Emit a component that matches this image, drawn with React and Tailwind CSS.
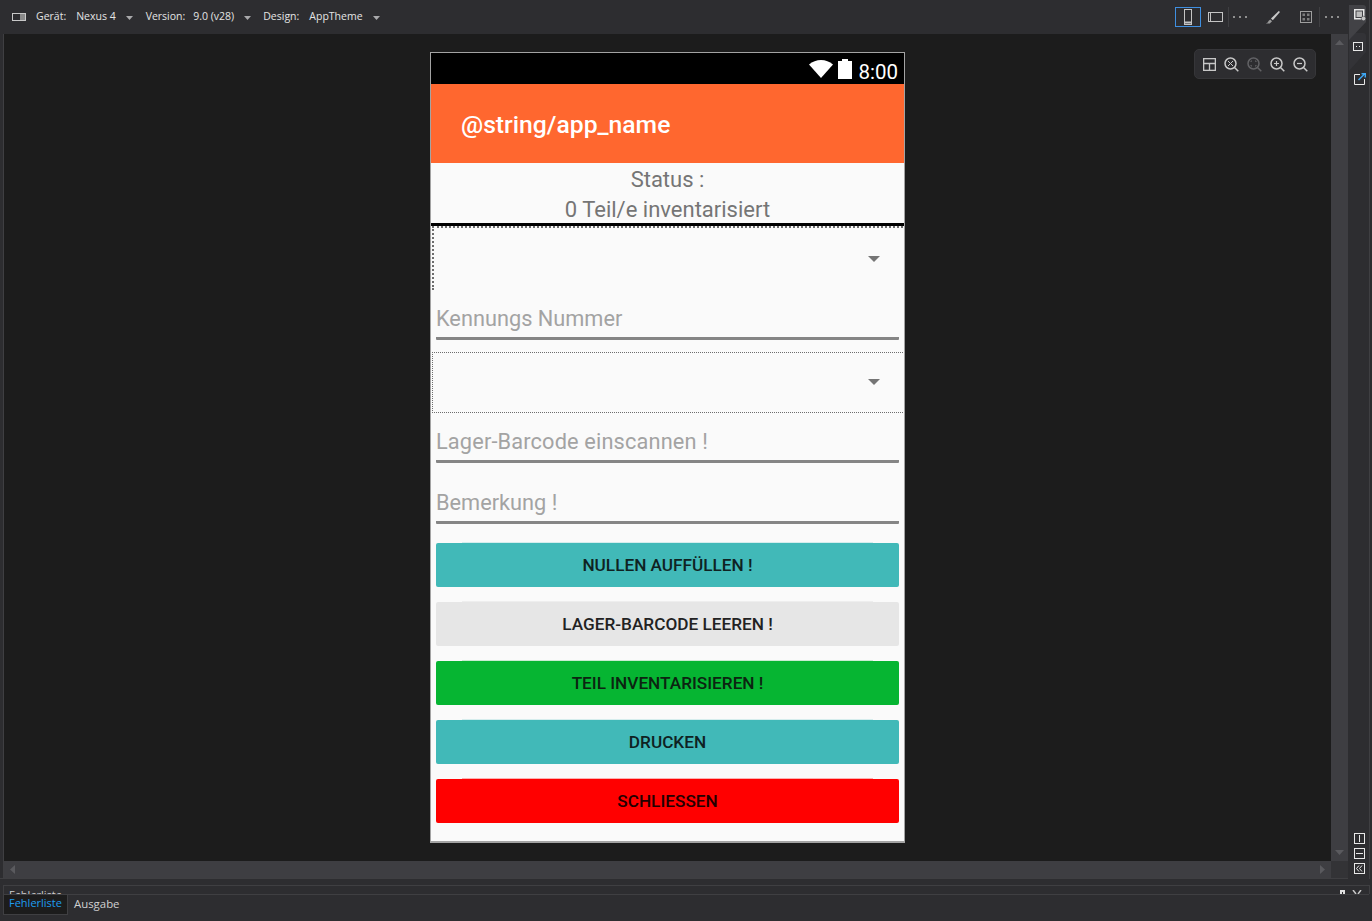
const Caret = () => (
  <svg width="7" height="4" viewBox="0 0 7 4" className="mt-[1px]">
    <path d="M0 0h7L3.5 4z" fill="#a9a9ab" />
  </svg>
);

function Picker({ label, value, gap, className = '' }) {
  return (
    <div className={`flex items-center ${className}`}>
      <span>{label}</span>
      <span className={gap}>{value}</span>
      <span className="ml-[10px]">
        <Caret />
      </span>
    </div>
  );
}

function ToolIcon({ children, w = 20, h = 20, className = '' }) {
  return (
    <svg width={w} height={h} viewBox={`0 0 ${w} ${h}`} fill="none" stroke="#c4c4c4" strokeWidth="1" className={className}>
      {children}
    </svg>
  );
}

const Dots = ({ className }) => (
  <svg width="14" height="2" viewBox="0 0 14 2" fill="#8f8f8f" className={className}>
    <rect width="2" height="2" />
    <rect x="6" width="2" height="2" />
    <rect x="12" width="2" height="2" />
  </svg>
);

function Toolbar() {
  return (
    <div className="h-[34px] shrink-0 flex items-center bg-[#2d2d30] text-[10.5px] text-[#e4e4e4] font-['Open_Sans',sans-serif]">
      <div className="ml-[12px] mr-[10px] w-[14px] h-[8px] border border-[#c8c8c8] flex">
        <div className="w-[7px] bg-[#2d2d30]" />
        <div className="flex-1 bg-[#8a8a8a]" />
      </div>
      <Picker label="Gerät:" value="Nexus 4" gap="ml-[10px]" />
      <Picker label="Version:" value="9.0 (v28)" gap="ml-[8px]" className="ml-[13px]" />
      <Picker label="Design:" value="AppTheme" gap="ml-[10px]" className="ml-[12px]" />
      <div className="ml-auto flex items-center h-full">
        <div className="w-[26px] h-[20px] border border-[#3f8fe0] flex items-center justify-center">
          <ToolIcon w={8} h={16}>
            <rect x="0.5" y="0.5" width="7" height="15" />
            <path d="M0 13.5h8" stroke="#c4c4c4" strokeWidth="2" />
          </ToolIcon>
        </div>
        <ToolIcon w={15} h={10} className="ml-[7px]">
          <rect x="0.5" y="0.5" width="14" height="9" />
          <path d="M2.5 0v10" />
        </ToolIcon>
        <div className="ml-[5px] w-px h-[20px] bg-[#3f3f42]" />
        <Dots className="ml-[4px]" />
        <svg width="15" height="15" viewBox="0 0 15 15" className="ml-[18px]">
          <path d="M14 0.8 6 8.5l1.8 1.8L14.8 2.2z" fill="#c9c9c9" />
          <path d="M5.2 9.4 7 11.2 4.800 13.600H0.800c1.600-.6 2.400-1.600 2.700-2.600z" fill="#9a9a9a" />
        </svg>
        <ToolIcon w={12} h={12} className="ml-[20px]">
          <rect x="0.5" y="0.5" width="11" height="11" stroke="#9f9f9f" />
          <rect x="2.5" y="2.5" width="2.5" height="2.5" fill="#7d7d7d" stroke="none" />
          <rect x="7" y="2.5" width="2.5" height="2.5" fill="#7d7d7d" stroke="none" />
          <rect x="2.5" y="7" width="2.5" height="2.5" fill="#7d7d7d" stroke="none" />
          <rect x="7" y="7" width="2.5" height="2.5" fill="#7d7d7d" stroke="none" />
        </ToolIcon>
        <div className="ml-[7px] w-px h-[20px] bg-[#3f3f42]" />
        <Dots className="ml-[5px] mr-[9px]" />
      </div>
    </div>
  );
}

function Lens({ children, stroke = '#c8c8c8' }) {
  return (
    <svg width="15" height="15" viewBox="0 0 15 15" fill="none" stroke={stroke} strokeWidth="1.5">
      <circle cx="6.500" cy="6.500" r="5.500" />
      <path d="M10.500 10.500l3.800 3.800" />
      {children}
    </svg>
  );
}

function ZoomControls() {
  return (
    <div className="absolute top-[15px] right-[15px] w-[122px] h-[30px] rounded-[5px] bg-[#2d2d30] border border-[#363639] flex items-center pl-[8px] gap-[8px]">
      <svg width="13" height="13" viewBox="0 0 13 13" fill="none" stroke="#c8c8c8" strokeWidth="1.300">
        <rect x="0.650" y="0.650" width="11.700" height="11.700" />
        <path d="M0.650 5.500h11.700M6.500 5.500v7" />
      </svg>
      <Lens><path d="M4 4l5 5M9 4l-5 5" strokeWidth="1" /></Lens>
      <Lens stroke="#626265"><path d="M4 5v-1h1M8 4h1v1M9 8v1h-1M5 9h-1v-1" strokeWidth="1" /></Lens>
      <Lens><path d="M4 6.500h5M6.500 4v5" strokeWidth="1.200" /></Lens>
      <Lens><path d="M4 6.500h5" strokeWidth="1.200" /></Lens>
    </div>
  );
}

function DeviceStatusBar() {
  return (
    <div className="h-[31px] shrink-0 bg-black flex items-end justify-end pr-[6px]">
      <svg width="24" height="18" viewBox="0 0 24 18" className="mr-[5px] mb-[6px]">
        <path d="M0 4.500C3.500 1.500 7.500 0 12 0s8.500 1.500 12 4.500L12 18z" fill="#fff" />
      </svg>
      <svg width="14" height="20" viewBox="0 0 14 20" className="mr-[6px] mb-[5px]">
        <path d="M4 0h6v2h4v18H0V2h4z" fill="#fff" />
      </svg>
      <span className="text-[20.500px] leading-[24px] text-white">8:00</span>
    </div>
  );
}

function Spinner({ className, caret }) {
  return (
    <div className={`relative shrink-0 ml-px mr-px border-dotted border-[#6d6d6d] ${className}`}>
      <svg width="12" height="6" viewBox="0 0 12 6" className={`absolute right-[23px] ${caret}`}>
        <path d="M0 0h12L6 6z" fill="#757575" />
      </svg>
    </div>
  );
}

function Field({ hint, className }) {
  return (
    <div className={`shrink-0 mx-[5px] border-b-[3px] border-[#858585] rounded-[1px] text-[21.750px] leading-[30px] text-[#a3a3a3] ${className}`}>
      {hint}
    </div>
  );
}

const buttons = [
  { label: 'NULLEN AUFFÜLLEN !', cls: 'bg-[#41b9b8] text-[#0f2222] before:bg-[#41b9b8]/20' },
  { label: 'LAGER-BARCODE LEEREN !', cls: 'bg-[#e6e6e6] text-[#222222] before:bg-[#e6e6e6]/60' },
  { label: 'TEIL INVENTARISIEREN !', cls: 'bg-[#06b532] text-[#0c2411] before:bg-[#06b532]/20' },
  { label: 'DRUCKEN', cls: 'bg-[#41b9b8] text-[#0f2222] before:bg-[#41b9b8]/20' },
  { label: 'SCHLIESSEN', cls: 'bg-[#ff0000] text-[#220000] before:bg-[#ff0000]/30' },
];

function Device() {
  return (
    <div className="w-[475px] h-[791px] border border-b-2 border-[#a3a3a3] bg-[#fafafa] flex flex-col font-['Roboto',sans-serif]">
      <DeviceStatusBar />
      <div className="h-[79px] shrink-0 bg-[#ff672f] flex items-center pl-[30px] pt-[2px] text-[24.700px] font-medium text-white">
        @string/app_name
      </div>
      <div className="h-[60px] shrink-0 pt-[2px] text-center text-[22px] leading-[30px] text-[#757575]">
        <div>Status :</div>
        <div>0 Teil/e inventarisiert</div>
      </div>
      <div className="h-[3px] shrink-0 bg-black" />
      <Spinner className="h-[64px] border-t-2 border-l-2" caret="top-[28px]" />
      <Field hint="Kennungs Nummer" className="mt-[11px] h-[39px] pt-[3px]" />
      <Spinner className="h-[61px] mt-[12px] border-y border-l" caret="top-[26px]" />
      <Field hint="Lager-Barcode einscannen !" className="mt-[13px] h-[37px] pt-px tracking-[0.15px]" />
      <Field hint="Bemerkung !" className="mt-[23px] h-[38px] pt-[2px]" />
      <div className="mt-[19px] mx-[5px] flex flex-col gap-[15px]">
        {buttons.map((b) => (
          <div
            key={b.label}
            className={`relative h-[44px] pt-px rounded-[2px] flex items-center justify-center text-[17.200px] font-medium before:absolute before:left-[26px] before:right-[26px] before:-top-px before:h-px ${b.cls}`}
          >
            {b.label}
          </div>
        ))}
      </div>
    </div>
  );
}

function RightRail() {
  return (
    <div className="relative w-[24px] shrink-0 h-[879px] bg-[#2d2d30] flex flex-col pl-[6px] pt-[9px]">
      <svg width="17" height="70" viewBox="0 0 17 70" className="absolute left-px top-[5px]">
        <path d="M0 28h14a3 3 0 0 1 3 3v16L0 66z" fill="#333337" />
        <path d="M0 0h14a3 3 0 0 1 3 3v14L0 35z" fill="#424246" />
      </svg>
      <svg width="12" height="12" viewBox="0 0 12 12" className="relative">
        <rect x="0.750" y="0.750" width="9" height="9" fill="none" stroke="#e8e8e8" strokeWidth="1.500" />
        <rect x="2.500" y="2.500" width="5.500" height="5.500" fill="#bdbdbd" />
        <circle cx="9.500" cy="9.500" r="2.300" fill="#c4c4c4" stroke="#2d2d30" strokeWidth="0.500" />
      </svg>
      <svg width="10" height="9" viewBox="0 0 10 9" className="relative mt-[21px] -ml-px">
        <rect x="0.500" y="0.500" width="9" height="8" fill="none" stroke="#e8e8e8" />
        <path d="M3 4.500h1M6 4.500h1" stroke="#e8e8e8" />
      </svg>
      <svg width="12" height="12" viewBox="0 0 12 12" className="relative mt-[22px]">
        <path d="M6 1.500H0.500v10h10V6" fill="none" stroke="#e8e8e8" />
        <path d="M4.500 7l6-6M7.500 0.700h3.800v3.800" fill="none" stroke="#3ea6f2" strokeWidth="1.500" />
      </svg>
      <div className="relative mt-auto mb-[5px] flex flex-col gap-[4px]">
        <svg width="11" height="11" viewBox="0 0 11 11">
          <rect x="0.500" y="0.500" width="10" height="10" fill="none" stroke="#e8e8e8" />
          <path d="M5.500 2v7" stroke="#e8e8e8" />
        </svg>
        <svg width="11" height="11" viewBox="0 0 11 11">
          <rect x="0.500" y="0.500" width="10" height="10" fill="none" stroke="#e8e8e8" />
          <path d="M2 5.500h7" stroke="#e8e8e8" />
        </svg>
        <svg width="11" height="11" viewBox="0 0 11 11">
          <rect x="0.500" y="0.500" width="10" height="10" fill="none" stroke="#e8e8e8" />
          <path d="M5 2.500 2.500 5.500 5 8.500M8 2.500 5.500 5.500 8 8.500" fill="none" stroke="#e8e8e8" />
        </svg>
      </div>
      <div className="absolute right-[2px] top-0 bottom-0 w-px bg-[#3f3f42]" />
    </div>
  );
}

export default function App() {
  return (
    <div className="w-[1372px] h-[921px] overflow-hidden flex flex-col bg-[#2d2d30]">
      <div className="flex h-[879px] shrink-0 border-b border-[#3f3f42]">
        <div className="flex-1 min-w-0 flex flex-col">
          <Toolbar />
          <div className="flex-1 min-h-0 flex flex-col ml-[3px] border-l border-[#3f3f42]">
            <div className="flex-1 flex min-h-0">
              <div className="relative flex-1 bg-[#1c1c1c] pl-[426px] pt-[18px]">
                <Device />
                <ZoomControls />
              </div>
              <div className="w-[17px] shrink-0 bg-[#3e3e42] flex flex-col items-center justify-between py-[6px]">
                <svg width="9" height="5" viewBox="0 0 9 5"><path d="M4.500 0 9 5H0z" fill="#5a5a5e" /></svg>
                <svg width="9" height="5" viewBox="0 0 9 5"><path d="M0 0h9L4.500 5z" fill="#5a5a5e" /></svg>
              </div>
            </div>
            <div className="h-[17px] shrink-0 flex">
              <div className="flex-1 bg-[#3e3e42] flex items-center justify-between px-[6px]">
                <svg width="5" height="9" viewBox="0 0 5 9"><path d="M5 0v9L0 4.500z" fill="#5a5a5e" /></svg>
                <svg width="5" height="9" viewBox="0 0 5 9"><path d="M0 0v9l5-4.500z" fill="#5a5a5e" /></svg>
              </div>
              <div className="w-[17px] shrink-0 bg-[#333336]" />
            </div>
          </div>
        </div>
        <RightRail />
      </div>
      <div className="relative mt-[6px] ml-[3px] mr-[2px] h-[9px] border border-b-0 border-[#3f3f42] overflow-hidden">
        <span className="absolute left-[5px] top-[1px] text-[11px] text-[#d0d0d0] font-['Open_Sans',sans-serif]">Fehlerliste</span>
        <div className="absolute right-[24px] top-[4px] w-[5px] h-[6px] border-2 border-[#e0e0e0]" />
        <svg width="10" height="4" viewBox="0 0 10 4" className="absolute right-[7px] top-[4px]">
          <path d="M1 0l3 4M9 0l-3 4" stroke="#c8c8c8" strokeWidth="1.500" />
        </svg>
      </div>
      <div className="h-[21px] mx-[3px] border-t border-[#3f3f42] flex items-stretch text-[11px] font-['Open_Sans',sans-serif]">
        <div className="w-[65px] -mt-px pb-[2px] bg-[#1c1c1c] border border-[#3f3f42] text-[#1e9cf0] flex items-center justify-center">Fehlerliste</div>
        <div className="ml-[6px] pb-[2px] flex items-center text-[11.400px] text-[#d0d0d0]">Ausgabe</div>
      </div>
    </div>
  );
}
